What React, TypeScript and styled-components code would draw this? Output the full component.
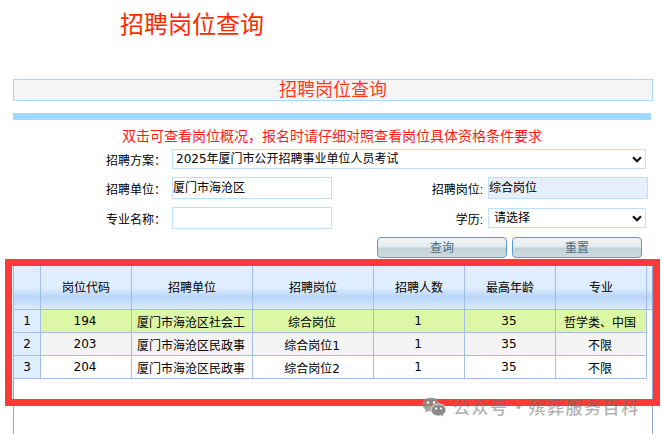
import React, { FC } from "react";
import styled, { createGlobalStyle } from "styled-components";

const GlobalStyle = createGlobalStyle`
  html, body {
    margin: 0;
    padding: 0;
    background: #fff;
  }
  body {
    width: 662px;
    height: 434px;
    overflow: hidden;
    font-family: "DejaVu Sans", "Noto Sans CJK SC", sans-serif;
    font-size: 12px;
    color: #000;
  }
`;

const Page = styled.div`
  position: relative;
  width: 662px;
  height: 434px;
  overflow: hidden;
`;

const PageTitle = styled.h1`
  margin: 0;
  padding: 10px 0 0 120px;
  height: 69px;
  box-sizing: border-box;
  font-size: 24px;
  line-height: 30px;
  font-weight: 400;
  color: #ff2a00;
`;

const Panel = styled.div`
  margin-left: 13px;
  width: 640px;
`;

const PanelTitle = styled.div`
  box-sizing: border-box;
  height: 22px;
  border: 1px solid #a8d8fb;
  background: #f5f5f5;
  color: #ff3b1f;
  font-size: 18px;
  line-height: 20px;
  text-align: center;
  margin-top: 10px;
`;

const Divider = styled.div`
  width: 638px;
  height: 7px;
  margin-top: 12px;
  background: #a0d9ff;
`;

const Notice = styled.div`
  margin-top: 7px;
  height: 18px;
  padding-left: 109px;
  color: #ff1a1a;
  font-size: 14px;
  line-height: 18px;
  white-space: nowrap;
`;

const FormGrid = styled.div`
  margin-top: 4px;
  display: grid;
  grid-template-columns: 159px 160px 156px 160px;
  grid-template-rows: 20px 22px 22px;
  row-gap: 8px;
  align-items: center;
`;

const Label = styled.label`
  justify-self: start;
  padding-left: 93px;
  white-space: nowrap;
`;

const RightLabel = styled.label`
  justify-self: end;
  padding-right: 5px;
  font-family: "Liberation Sans", "Noto Sans CJK SC", sans-serif;
  white-space: nowrap;
`;

const fieldBorder = "1px solid #bfe0fb";

const TextField = styled.div<{ $filled?: boolean }>`
  box-sizing: border-box;
  height: 22px;
  width: 160px;
  border: ${fieldBorder};
  background: ${(p) => (p.$filled ? "#e6effc" : "#fff")};
  line-height: 20px;
  white-space: nowrap;
`;

const SelectBox = styled.div<{ $wide?: boolean }>`
  box-sizing: border-box;
  height: 20px;
  width: ${(p) => (p.$wide ? "474px" : "158px")};
  grid-column: ${(p) => (p.$wide ? "2 / 5" : "auto")};
  border: ${fieldBorder};
  background: #fff;
  line-height: 18px;
  padding-left: ${(p) => (p.$wide ? "3px" : "5px")};
  display: flex;
  align-items: center;
  justify-content: space-between;
  white-space: nowrap;
  svg {
    margin-right: 3px;
    flex: none;
  }
`;

const ButtonRow = styled.div`
  margin-top: 8px;
  margin-left: 364px;
  display: flex;
  gap: 5px;
`;

const ActionButton = styled.div`
  box-sizing: border-box;
  width: 130px;
  height: 21px;
  border: 1px solid #5b9bd5;
  border-radius: 4px;
  background: linear-gradient(#f0f4f4 0%, #e4ebec 45%, #c3d2d8 55%, #cfdbe0 100%);
  color: #4a6a80;
  line-height: 20px;
  text-align: center;
`;

const GridFrame = styled.div`
  display: flow-root;
  margin-top: 8px;
  box-sizing: border-box;
  width: 640px;
  height: 168px;
  border-left: 1px solid #8ea9cf;
  border-right: 1px solid #8ea9cf;
  background:
    linear-gradient(#a3bfe8, #a3bfe8) 0 43px / 100% 1px no-repeat,
    linear-gradient(#dfeeff 0%, #dfeeff 50%, #b9d5f6 72%, #dcebfd 100%) 0 0 / 100% 43px no-repeat;
`;

const DataTable = styled.table`
  border-collapse: collapse;
  table-layout: fixed;
  width: 634px;
  margin: -1px 0 0 -1px;
  td, th {
    border: 1px solid #a3bfe8;
    padding: 0;
    text-align: center;
    font-weight: 400;
    font-size: 12px;
    white-space: nowrap;
    overflow: hidden;
  }
`;

const HeadRow = styled.tr`
  height: 44px;
  th {
    padding-bottom: 3px;
    background: transparent;
  }
`;

const BodyRow = styled.tr<{ $bg: string }>`
  height: 23px;
  td {
    padding-right: 2px;
    background: ${(p) => p.$bg};
  }
`;

const IndexCell = styled.td`
  && {
    padding-right: 0;
    background: #dfeeff;
  }
`;

const RedFrame = styled.div`
  position: absolute;
  left: 5px;
  top: 259px;
  width: 655px;
  height: 147px;
  box-sizing: border-box;
  border: 7px solid #ff3838;
`;

const Watermark = styled.div`
  position: absolute;
  left: 422px;
  top: 397px;
  display: flex;
  align-items: center;
  gap: 7px;
  color: rgba(110, 110, 110, 0.55);
  font-family: "Noto Sans CJK SC", sans-serif;
  font-size: 17px;
  font-weight: 500;
  line-height: 20px;
  letter-spacing: 1.5px;
  white-space: nowrap;
`;

const WatermarkDot = styled.span`
  display: inline-block;
  width: 20px;
  letter-spacing: 0;
  text-align: center;
`;

const Chevron: FC = () => (
  <svg width="10" height="7" viewBox="0 0 10 7">
    <path d="M1 1.2 L5 5.2 L9 1.2" fill="none" stroke="#111" strokeWidth="2.2" />
  </svg>
);

const WechatMark: FC = () => (
  <svg width="24" height="20" viewBox="0 0 24 20">
    <path d="M9 0.5C4.2 0.5 0.5 3.7 0.5 7.6c0 2.2 1.2 4.1 3.1 5.4L3 15.6l3-1.5c1 .3 2 .4 3 .4 4.8 0 8.5-3 8.5-6.9S13.800.5 9 .5z" fill="#8c8c8c" fillOpacity="0.8" />
    <circle cx="6" cy="5.500" r="1.200" fill="#fff" />
    <circle cx="12" cy="5.500" r="1.200" fill="#fff" />
    <path d="M16.500 7C12.300 7 9 9.700 9 13s3.300 6 7.500 6c.9 0 1.700-.1 2.500-.4l2.600 1.300-.6-2.300c1.800-1.100 3-2.800 3-4.600C24 9.700 20.700 7 16.500 7z" fill="#8c8c8c" stroke="#fff" strokeWidth="0.8" />
    <circle cx="14" cy="11.500" r="1.100" fill="#fff" />
    <circle cx="19" cy="11.500" r="1.100" fill="#fff" />
  </svg>
);

type Job = { code: string; unit: string; post: string; count: string; age: string; major: string; bg: string };

const jobs: Job[] = [
  { code: "194", unit: "厦门市海沧区社会工", post: "综合岗位", count: "1", age: "35", major: "哲学类、中国", bg: "#dcf7a6" },
  { code: "203", unit: "厦门市海沧区民政事", post: "综合岗位1", count: "1", age: "35", major: "不限", bg: "#f4f4f4" },
  { code: "204", unit: "厦门市海沧区民政事", post: "综合岗位2", count: "1", age: "35", major: "不限", bg: "#ffffff" },
];

const columns = [27, 91, 121, 121, 91, 91, 91];
const headers = ["", "岗位代码", "招聘单位", "招聘岗位", "招聘人数", "最高年龄", "专业"];

const App: FC = () => (
  <Page>
    <GlobalStyle />
    <PageTitle>招聘岗位查询</PageTitle>
    <Panel>
      <PanelTitle>招聘岗位查询</PanelTitle>
      <Divider />
      <Notice>双击可查看岗位概况，报名时请仔细对照查看岗位具体资格条件要求</Notice>
      <FormGrid>
        <Label>招聘方案：</Label>
        <SelectBox $wide>
          2025年厦门市公开招聘事业单位人员考试
          <Chevron />
        </SelectBox>
        <Label>招聘单位：</Label>
        <TextField>厦门市海沧区</TextField>
        <RightLabel>招聘岗位:</RightLabel>
        <TextField $filled>综合岗位</TextField>
        <Label>专业名称：</Label>
        <TextField />
        <RightLabel>学历:</RightLabel>
        <SelectBox>
          请选择
          <Chevron />
        </SelectBox>
      </FormGrid>
      <ButtonRow>
        <ActionButton>查询</ActionButton>
        <ActionButton>重置</ActionButton>
      </ButtonRow>
      <GridFrame>
        <DataTable>
          <colgroup>
            {columns.map((w, i) => (
              <col key={i} width={w} />
            ))}
          </colgroup>
          <thead>
            <HeadRow>
              {headers.map((h, i) => (
                <th key={i}>{h}</th>
              ))}
            </HeadRow>
          </thead>
          <tbody>
            {jobs.map((job, i) => (
              <BodyRow key={job.code} $bg={job.bg}>
                <IndexCell>{i + 1}</IndexCell>
                <td>{job.code}</td>
                <td>{job.unit}</td>
                <td>{job.post}</td>
                <td>{job.count}</td>
                <td>{job.age}</td>
                <td>{job.major}</td>
              </BodyRow>
            ))}
          </tbody>
        </DataTable>
      </GridFrame>
    </Panel>
    <RedFrame />
    <Watermark>
      <WechatMark />
      <span>
        公众号<WatermarkDot>·</WatermarkDot>殡葬服务百科
      </span>
    </Watermark>
  </Page>
);

export default App;
